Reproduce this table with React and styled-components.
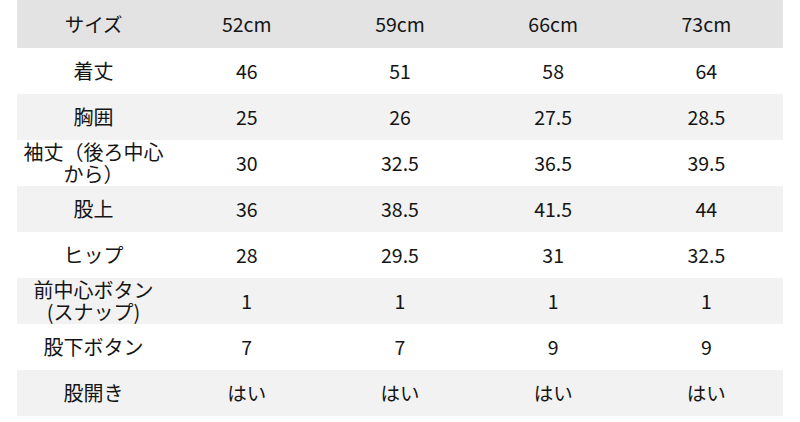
import React from 'react';
import styled, { createGlobalStyle } from 'styled-components';

const GlobalStyle = createGlobalStyle`
  html, body {
    margin: 0;
    padding: 0;
    background: #ffffff;
  }
  body {
    font-family: "Noto Sans CJK JP", "Noto Sans", sans-serif;
    color: #151515;
  }
`;

const sizes = ['52cm', '59cm', '66cm', '73cm'];

// ラベルの改行は元の表に合わせて \n で入れている
const rows = [
  { label: '着丈', values: ['46', '51', '58', '64'] },
  { label: '胸囲', values: ['25', '26', '27.5', '28.5'] },
  { label: '袖丈（後ろ中心から）', values: ['30', '32.5', '36.5', '39.5'] },
  { label: '股上', values: ['36', '38.5', '41.5', '44'] },
  { label: 'ヒップ', values: ['28', '29.5', '31', '32.5'] },
  { label: '前中心ボタン\n(スナップ)', values: ['1', '1', '1', '1'] },
  { label: '股下ボタン', values: ['7', '7', '9', '9'] },
  { label: '股開き', values: ['はい', 'はい', 'はい', 'はい'] },
];

const App = () => {
  return (
    <>
      <GlobalStyle />
      <Wrap>
        <Table>
          <thead>
            <HeadRow>
              <Cell as="th">サイズ</Cell>
              {sizes.map((s) => (
                <Cell as="th" key={s}>{s}</Cell>
              ))}
            </HeadRow>
          </thead>
          <tbody>
            {rows.map((row, i) => (
              <Row key={row.label} $shaded={i % 2 === 1}>
                <LabelCell>{row.label}</LabelCell>
                {row.values.map((v, j) => (
                  <Cell key={j}>{v}</Cell>
                ))}
              </Row>
            ))}
          </tbody>
        </Table>
      </Wrap>
    </>
  );
};

export default App;

const Wrap = styled.div`
  width: 800px;
  height: 422px;
  padding: 0 17px;
  box-sizing: border-box;
  overflow: hidden;
`;

const Table = styled.table`
  width: 100%;
  border-collapse: collapse;
  table-layout: fixed;
`;

const HeadRow = styled.tr`
  height: 48px;
  background: #e3e3e3;
`;

const Row = styled.tr`
  height: 46px;
  background: ${(p) => (p.$shaded ? '#f2f2f2' : '#ffffff')};
`;

const Cell = styled.td`
  padding: 0 6px;
  text-align: center;
  vertical-align: middle;
  font-size: 19.5px;
  font-weight: 400;
  line-height: 1.1;
`;

const LabelCell = styled(Cell)`
  padding: 0 4px;
  white-space: pre-line;
  font-size: 20px;
`;
